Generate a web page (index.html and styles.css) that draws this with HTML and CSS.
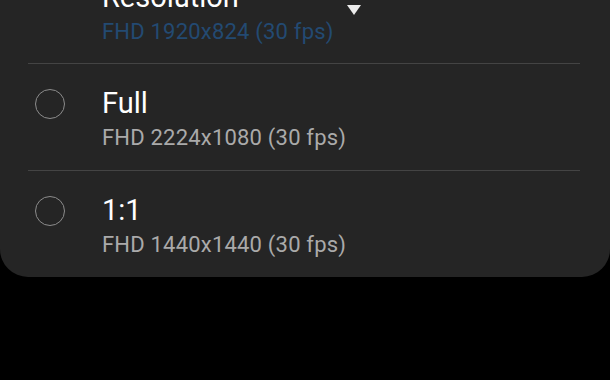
FILE: index.html
```html
<!DOCTYPE html>
<html lang="en">
<head>
    <meta charset="UTF-8">
    <meta name="viewport" content="width=device-width, initial-scale=1.0">
    <title>Resolution</title>
    <link rel="stylesheet" href="styles.css">
</head>
<body>
    <div class="sheet">
        <div class="header">
            <div class="title-row">
                <span class="title">Resolution</span>
                <span class="arrow"></span>
            </div>
            <div class="current">FHD 1920x824 (30 fps)</div>
        </div>

        <div class="option">
            <span class="radio"></span>
            <div class="text">
                <div class="name">Full</div>
                <div class="detail">FHD 2224x1080 (30 fps)</div>
            </div>
        </div>

        <div class="option">
            <span class="radio"></span>
            <div class="text">
                <div class="name">1:1</div>
                <div class="detail">FHD 1440x1440 (30 fps)</div>
            </div>
        </div>
    </div>
</body>
</html>
```

FILE: styles.css
```css
body {
    margin: 0;
    padding: 0;
    background: #000;
    font-family: Roboto, "Noto Sans", sans-serif;
    overflow: hidden;
}
.sheet {
    background: #252525;
    border-radius: 0 0 28px 28px;
    height: 277px;
    padding: 0 30px 0 28px;
    box-sizing: border-box;
}
.header {
    padding-left: 74px;
    height: 63px;
    border-bottom: 1.5px solid #444;
}
.title-row {
    display: flex;
    align-items: flex-start;
}
.title {
    color: #fff;
    font-size: 29px;
    line-height: 34px;
    margin-top: -20px;
}
.arrow {
    width: 0;
    height: 0;
    border-left: 7px solid transparent;
    border-right: 7px solid transparent;
    border-top: 10px solid #ececec;
    margin-left: 108px;
    margin-top: 5px;
}
.current {
    color: #234a72;
    font-size: 22px;
    line-height: 26px;
    letter-spacing: 0.2px;
    margin-top: 4px;
}
.option {
    display: flex;
    align-items: flex-start;
    height: 107px;
    padding-top: 22px;
    border-bottom: 1.5px solid #444;
    box-sizing: border-box;
}
.option:last-child {
    border-bottom: none;
}
.radio {
    width: 30px;
    height: 30px;
    box-sizing: border-box;
    border: 1.6px solid #8c8c8c;
    border-radius: 50%;
    margin: 3px 37px 0 7px;
    flex-shrink: 0;
}
.name {
    color: #fff;
    font-size: 29px;
    line-height: 34px;
}
.detail {
    color: #aaa;
    font-size: 22px;
    line-height: 26px;
    letter-spacing: 0.2px;
    margin-top: 5px;
}
```
